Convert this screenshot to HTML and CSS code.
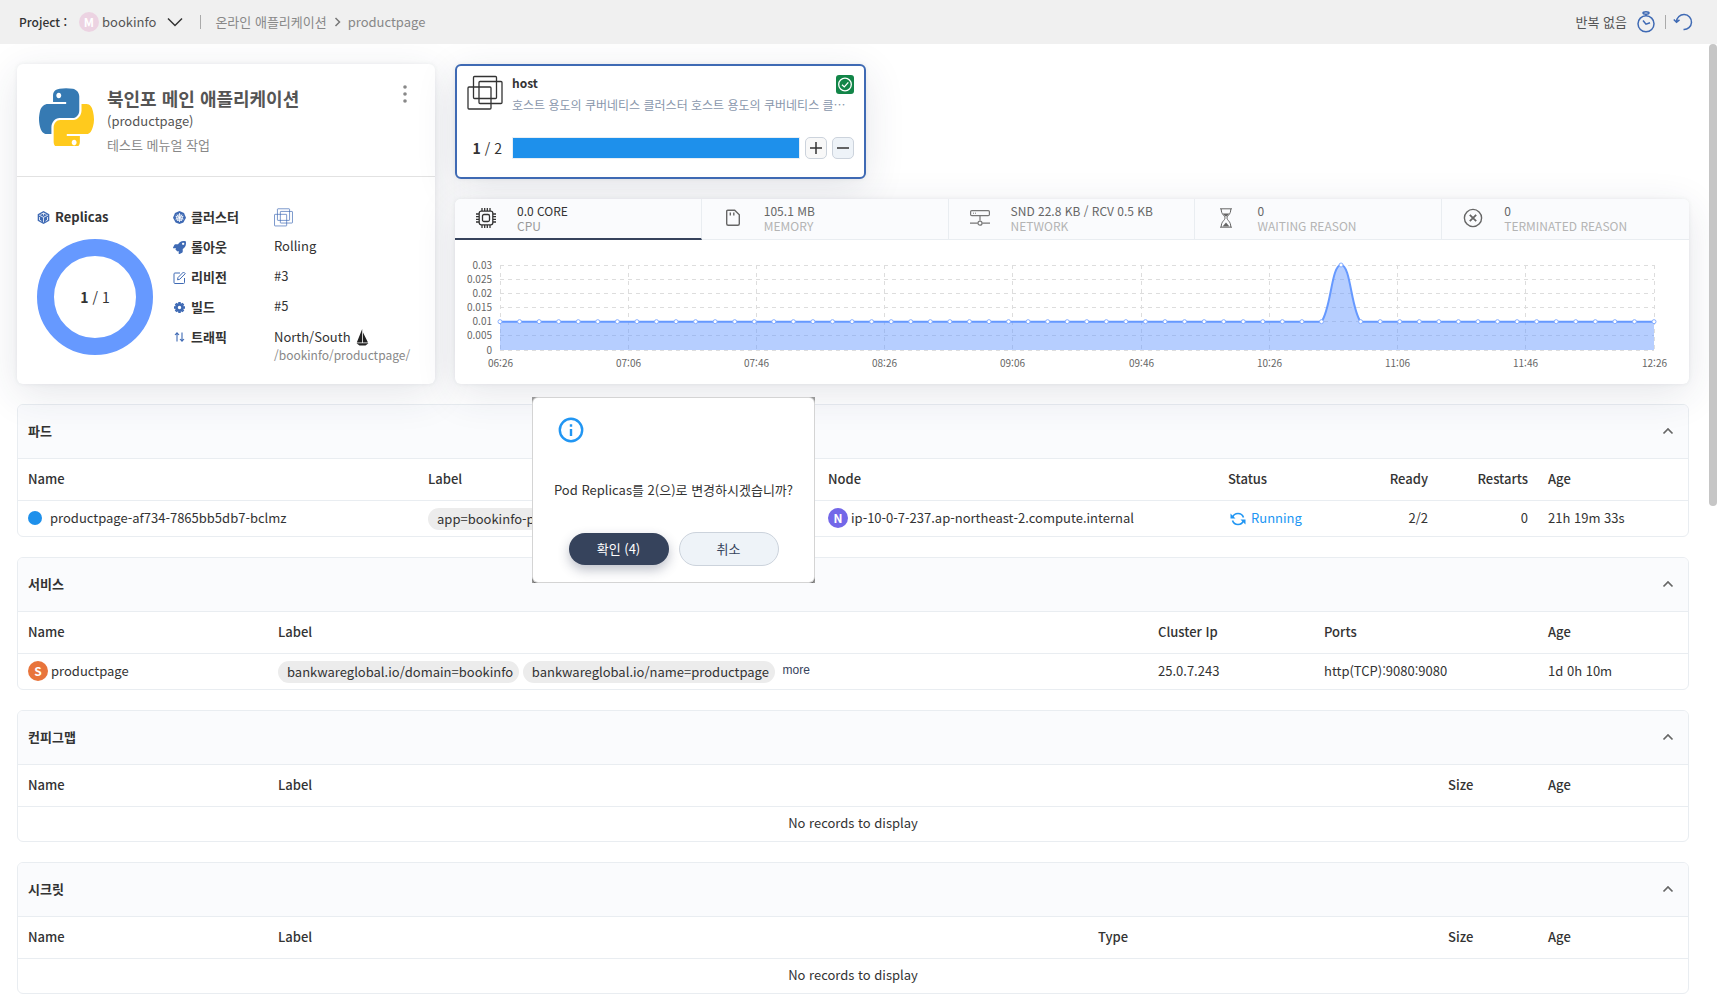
FILE: index.html
```html
<!DOCTYPE html>
<html lang="ko">
<head>
<meta charset="utf-8">
<title>productpage</title>
<meta name="viewport" content="width=device-width, initial-scale=1">
<link rel="stylesheet" href="styles.css">
</head>
<body>
<svg class="sprite" aria-hidden="true">
  <symbol id="i-layers" viewBox="0 0 36 36" fill="none" stroke="currentColor" stroke-width="1.300">
    <rect x="6.500" y="1.500" width="23" height="22" rx="1"/>
    <rect x="12" y="6.500" width="23" height="22" rx="1"/>
    <rect x="1" y="12" width="23" height="22" rx="1"/>
  </symbol>
  <symbol id="i-up" viewBox="0 0 12 12" fill="none" stroke="currentColor" stroke-width="1.700"><path d="M1.500 8.500 6 4l4.500 4.500"/></symbol>
</svg>

<header class="topbar">
  <span class="topbar-label">Project :</span>
  <button class="project" type="button">
    <span class="badge badge-m">M</span>
    <span>bookinfo</span>
    <svg class="project-arrow" width="16" height="10" viewBox="0 0 16 10" fill="none" stroke="#333" stroke-width="1.500"><path d="M1 1.500 8 8.500l7-7"/></svg>
  </button>
  <span class="bar bar-crumb"></span>
  <nav class="crumbs">
    <a href="#">온라인 애플리케이션</a>
    <svg width="7" height="10" viewBox="0 0 7 10" fill="none" stroke="#777" stroke-width="1.500"><path d="M1.500 1 5.500 5l-4 4"/></svg>
    <a href="#">productpage</a>
  </nav>
  <div class="refresh">
    <span>반복 없음</span>
    <button class="icon-btn" type="button" aria-label="Interval">
      <svg width="18" height="22" viewBox="0 0 18 22" fill="none" stroke="#3f6ab4" stroke-width="1.500"><ellipse cx="9" cy="2" rx="3" ry="1.200"/><path d="M9 3v2M6 9.500 9 13.200l4-1.500"/><circle cx="9" cy="12.800" r="8"/></svg>
    </button>
    <span class="bar"></span>
    <button class="icon-btn" type="button" aria-label="Reload">
      <svg width="20" height="18" viewBox="0 0 20 18" fill="none" stroke="#3f6ab4" stroke-width="1.500"><path d="M3.500 8.800A7.500 7.500 0 1 1 10.500 16.500M.8 6.500l2.700 2.800 3-2.500"/></svg>
    </button>
  </div>
</header>

<div class="scroller">
<main class="page">
  <div class="overview">
    <section class="card app">
      <div class="app-head">
        <svg class="app-logo" viewBox="0 31 448 418" preserveAspectRatio="none"><path fill="#ffca1d" d="M439.800 200.500c-7.700-30.900-22.300-54.200-53.400-54.200h-40.100v47.400c0 36.800-31.200 67.800-66.800 67.800H172.700c-29.200 0-53.400 25-53.400 54.300v101.800c0 29 25.200 46 53.400 54.300 33.800 9.900 66.300 11.700 106.800 0 26.900-7.800 53.400-23.500 53.400-54.300v-40.700H226.200v-13.600h160.200c31.100 0 42.600-21.700 53.400-54.200 11.200-33.500 10.700-65.700 0-108.600zM286.200 404c11.100 0 20.100 9.100 20.100 20.300 0 11.300-9 20.400-20.100 20.400-11 0-20.100-9.200-20.100-20.400.1-11.300 9.100-20.300 20.100-20.300z"/><path fill="#367ab3" d="M167.800 248.100h106.800c29.700 0 53.400-24.500 53.400-54.300V91.900c0-29-24.400-50.700-53.400-55.600-35.800-5.900-74.700-5.600-106.800.1-45.200 8-53.400 24.700-53.400 55.600v40.700h106.900v13.600h-147c-31.100 0-58.300 18.700-66.800 54.200-9.800 40.700-10.200 66.100 0 108.600 7.600 31.600 25.700 54.200 56.800 54.200H101v-48.800c0-35.300 30.500-66.400 66.800-66.400zm-6.700-142.600c-11.100 0-20.100-9.100-20.100-20.300.1-11.300 9-20.400 20.100-20.400 11 0 20.100 9.200 20.100 20.400s-9 20.300-20.100 20.300z"/></svg>
        <div class="app-names">
          <h1>북인포 메인 애플리케이션</h1>
          <p class="app-id">(productpage)</p>
          <p class="app-desc">테스트 메뉴얼 작업</p>
        </div>
        <button class="icon-btn app-menu" type="button" aria-label="Menu">
          <svg width="4" height="18" viewBox="0 0 4 18" fill="#888"><circle cx="2" cy="2" r="1.800"/><circle cx="2" cy="9" r="1.800"/><circle cx="2" cy="16" r="1.800"/></svg>
        </button>
      </div>
      <div class="app-body">
        <div class="replicas">
          <h2 class="spec-name">
            <svg width="13" height="13" viewBox="0 0 13 13"><path fill="#3f6ab4" d="M6.500 0 12.300 3.200v6.600L6.500 13 .7 9.800V3.200z"/><path fill="none" stroke="#fff" stroke-width=".8" d="M2 4l4.500 2.400L11 4M6.500 6.400v5M6.500 2 3.500 3.600M6.500 2l3 1.600M6.500 2v2.500M2.500 6v3l2 1.200M10.500 6v3l-2 1.200"/></svg>
            Replicas
          </h2>
          <div class="donut"><span><b>1</b> / 1</span></div>
        </div>
        <dl class="specs">
          <dt class="spec-name"><svg width="13" height="13" viewBox="0 0 13 13"><path fill="#3f6ab4" d="M6.500 0 11 2l2 4.700-2.600 4.800-3.900 1.500-3.900-1.500L0 6.700 2 2z"/><g fill="none" stroke="#fff" stroke-width=".8"><circle cx="6.500" cy="6.700" r="3"/><path d="M6.500 2v9M2.500 5.200l8 3M10.500 5.200l-8 3M4 10l5-6.500M9 10 4 3.500"/></g></svg>클러스터</dt>
          <dd><svg class="spec-cluster" width="19" height="19"><use href="#i-layers"/></svg></dd>
          <dt class="spec-name"><svg width="13" height="13" viewBox="0 0 512 512"><path fill="#3f6ab4" d="M505.100 19.100C503.800 13 499 8.200 492.900 6.900 460.700 0 435.500 0 410.400 0 307.200 0 245.300 55.200 199.100 128H94.900c-18.200 0-34.800 10.300-42.900 26.500L2.600 253.300c-8 16 3.600 34.700 21.500 34.700h95.100c-5.900 12.800-11.900 25.500-18 37.700-3.100 6.200-1.900 13.600 3 18.500l63.600 63.600c4.900 4.900 12.300 6.100 18.500 3 12.200-6.100 24.900-12 37.700-17.900V488c0 17.800 18.800 29.400 34.700 21.500l98.700-49.400c16.300-8.100 26.500-24.800 26.500-42.900V312.800c72.600-46.300 128-108.400 128-211.100.1-25.200.1-50.400-6.800-82.600zM400 160c-26.500 0-48-21.500-48-48s21.500-48 48-48 48 21.500 48 48-21.500 48-48 48z"/></svg>롤아웃</dt>
          <dd>Rolling</dd>
          <dt class="spec-name"><svg width="13" height="13" viewBox="0 0 13 13" fill="none" stroke="#3f6ab4"><path d="M7 2H1.800A1 1 0 0 0 1 3v8.500a1 1 0 0 0 1 1h8.500a1 1 0 0 0 1-1V7M4.500 8.800 5 6.500 10.500 1l1.700 1.700L6.700 8.300z"/></svg>리비전</dt>
          <dd>#3</dd>
          <dt class="spec-name"><svg width="13" height="13" viewBox="0 0 13 13" fill="none" stroke="#3f6ab4"><circle cx="6.500" cy="6.500" r="3.100" stroke-width="2.800"/><path stroke-width="2.500" d="M6.500 1v1.500M6.500 10.500V12M1 6.500h1.500M10.500 6.500H12M2.600 2.600l1 1M9.400 9.400l1 1M2.600 10.400l1-1M9.400 3.600l1-1"/></svg>빌드</dt>
          <dd>#5</dd>
          <dt class="spec-name"><svg width="13" height="13" viewBox="0 0 13 13" fill="none" stroke="#3f6ab4" stroke-width="1.100"><path d="M4 10.500V2M2 4l2-2.200L6 4M9 1.500V10M7 8l2 2.200L11 8"/></svg>트래픽</dt>
          <dd class="traffic">North/South <svg class="sail" width="13" height="17" viewBox="0 0 13 17" fill="#222"><path d="M6.200 0v13.500H.8zM7 3.500l5 10H7zM.5 14.300h12L9.500 16.500h-6z"/></svg><span class="path">/bookinfo/productpage/</span></dd>
        </dl>
      </div>
    </section>

    <div class="side">
      <section class="card cluster">
        <svg class="cluster-icon" width="36" height="36"><use href="#i-layers"/></svg>
        <div class="cluster-text">
          <h2>host</h2>
          <p>호스트 용도의 쿠버네티스 클러스터 호스트 용도의 쿠버네티스 클러스터</p>
        </div>
        <svg class="cluster-ok" width="18" height="19" viewBox="0 0 18 19"><rect width="18" height="19" rx="3" fill="#128548"/><g fill="none" stroke="#fff" stroke-width="1.300"><circle cx="9" cy="9.500" r="6.300"/><path d="m6 9.700 2.300 2.200 4-4.500"/></g></svg>
        <span class="cluster-count"><b>1</b> / 2</span>
        <div class="cluster-scale">
          <div class="gauge"></div>
          <button class="step" type="button" aria-label="Increase"><svg width="12" height="12" viewBox="0 0 12 12" stroke="#333" stroke-width="1.500"><path d="M0 6h12M6 0v12"/></svg></button>
          <button class="step step-down" type="button" aria-label="Decrease"><svg width="12" height="12" viewBox="0 0 12 12" stroke="#333" stroke-width="1.500"><path d="M0 6h12"/></svg></button>
        </div>
      </section>

      <section class="card metrics">
        <div class="tabs" role="tablist">
          <button class="tab tab-on" type="button" role="tab" aria-selected="true">
            <svg width="20" height="20" viewBox="0 0 20 20" fill="none" stroke="#333" stroke-width="1.300"><rect x="3.200" y="3.200" width="13.600" height="13.600" rx="2"/><rect x="6.500" y="6.500" width="7" height="7" rx="1.500"/><path d="M6 0v3M8.700 0v3M11.300 0v3M14 0v3M6 17v3M8.700 17v3M11.300 17v3M14 17v3M0 6h3M0 8.700h3M0 11.300h3M0 14h3M17 6h3M17 8.700h3M17 11.300h3M17 14h3"/></svg>
            <span>0.0 CORE<small>CPU</small></span>
          </button>
          <button class="tab" type="button" role="tab" aria-selected="false">
            <svg width="20" height="20" viewBox="0 0 20 20" fill="none" stroke="#666" stroke-width="1.400"><path d="M4.700 2.200h7l4.600 4.500v9a1.500 1.500 0 0 1-1.500 1.500H5.200a1.500 1.500 0 0 1-1.500-1.500v-12.500a1 1 0 0 1 1-1zM7.300 4.500v3M10.800 4.500v3"/></svg>
            <span>105.1 MB<small>MEMORY</small></span>
          </button>
          <button class="tab" type="button" role="tab" aria-selected="false">
            <svg width="20" height="20" viewBox="0 0 20 20" fill="none" stroke="#777"><rect x=".6" y="2.600" width="18.800" height="5" rx="1.200" stroke-width="1.200"/><path d="M10 7.600v5M0 15.200h7.800M12.200 15.200H20" stroke-width="1.200"/><circle cx="10" cy="15.200" r="2" stroke-width="1.200"/><path d="M3 5.200h1M5 5.200h1"/></svg>
            <span>SND 22.8 KB / RCV 0.5 KB<small>NETWORK</small></span>
          </button>
          <button class="tab" type="button" role="tab" aria-selected="false">
            <svg width="20" height="20" viewBox="0 0 20 20" fill="none" stroke="#666"><path d="M4 .8h12M4 19.200h12M5.200 1C5.200 7 9 7.500 9 10s-3.800 3-3.800 9M14.800 1c0 6-3.800 6.500-3.800 9s3.800 3 3.800 9"/><path fill="#666" stroke="none" d="M6.500 5.500h7L10.500 8.500h-1zM10 14.500l3.500 4h-7z"/></svg>
            <span>0<small>WAITING REASON</small></span>
          </button>
          <button class="tab" type="button" role="tab" aria-selected="false">
            <svg width="20" height="20" viewBox="0 0 20 20" fill="none" stroke="#666" stroke-width="1.400"><circle cx="10" cy="10" r="8.600"/><path stroke-width="1.800" d="m6.800 6.800 6.400 6.400M13.200 6.800l-6.400 6.400"/></svg>
            <span>0<small>TERMINATED REASON</small></span>
          </button>
        </div>
        <div class="chart" id="chart"></div>
      </section>
    </div>
  </div>

  <section class="panel">
    <div class="panel-head"><h2>파드</h2><button class="icon-btn" type="button" aria-label="Collapse"><svg width="12" height="12"><use href="#i-up"/></svg></button></div>
    <table>
      <colgroup><col class="w400"><col class="w400"><col class="w400"><col class="w120"><col><col class="w100"><col class="w150"></colgroup>
      <thead><tr><th>Name</th><th>Label</th><th>Node</th><th>Status</th><th class="num">Ready</th><th class="num">Restarts</th><th>Age</th></tr></thead>
      <tbody><tr>
        <td><span class="dot"></span>productpage-af734-7865bb5db7-bclmz</td>
        <td><span class="chip">app=bookinfo-productpage</span></td>
        <td><span class="badge badge-n">N</span>ip-10-0-7-237.ap-northeast-2.compute.internal</td>
        <td class="running"><svg width="16" height="14" viewBox="0 0 16 14" fill="none" stroke="#2196f3" stroke-width="1.600"><path d="M2.500 5.500A5.800 5.800 0 0 1 13.500 5.500M13.500 8.500A5.800 5.800 0 0 1 2.500 8.500"/><path fill="#2196f3" stroke="none" d="M.5 1.500v5h5zM15.500 12.500v-5h-5z"/></svg>Running</td>
        <td class="num">2/2</td><td class="num">0</td><td>21h 19m 33s</td>
      </tr></tbody>
    </table>
  </section>

  <section class="panel">
    <div class="panel-head"><h2>서비스</h2><button class="icon-btn" type="button" aria-label="Collapse"><svg width="12" height="12"><use href="#i-up"/></svg></button></div>
    <table>
      <colgroup><col class="w250"><col><col class="w166"><col class="w224"><col class="w150"></colgroup>
      <thead><tr><th>Name</th><th>Label</th><th>Cluster Ip</th><th>Ports</th><th>Age</th></tr></thead>
      <tbody><tr>
        <td><span class="badge badge-s">S</span>productpage</td>
        <td><span class="chip">bankwareglobal.io/domain=bookinfo</span> <span class="chip">bankwareglobal.io/name=productpage</span> <button class="more" type="button">more</button></td>
        <td>25.0.7.243</td><td>http(TCP):9080:9080</td><td>1d 0h 10m</td>
      </tr></tbody>
    </table>
  </section>

  <section class="panel">
    <div class="panel-head"><h2>컨피그맵</h2><button class="icon-btn" type="button" aria-label="Collapse"><svg width="12" height="12"><use href="#i-up"/></svg></button></div>
    <table>
      <colgroup><col class="w250"><col><col class="w100"><col class="w150"></colgroup>
      <thead><tr><th>Name</th><th>Label</th><th>Size</th><th>Age</th></tr></thead>
      <tbody><tr><td class="empty" colspan="4">No records to display</td></tr></tbody>
    </table>
  </section>

  <section class="panel">
    <div class="panel-head"><h2>시크릿</h2><button class="icon-btn" type="button" aria-label="Collapse"><svg width="12" height="12"><use href="#i-up"/></svg></button></div>
    <table>
      <colgroup><col class="w250"><col><col class="w350"><col class="w100"><col class="w150"></colgroup>
      <thead><tr><th>Name</th><th>Label</th><th>Type</th><th>Size</th><th>Age</th></tr></thead>
      <tbody><tr><td class="empty" colspan="5">No records to display</td></tr></tbody>
    </table>
  </section>
</main>
<div class="rail" aria-hidden="true"><div class="rail-thumb"></div></div>
</div>

<div class="modal" role="dialog" aria-label="Pod Replicas">
  <div class="modal-box">
    <svg class="modal-icon" width="26" height="26" viewBox="0 0 26 26" fill="none" stroke="#2196f3" stroke-width="2.400"><circle cx="13" cy="13" r="11.200"/><path d="M13 12v7M13 7.200v2.500"/></svg>
    <p>Pod Replicas를 2(으)로 변경하시겠습니까?</p>
    <div class="modal-actions">
      <button class="pill pill-main" type="button">확인 (4)</button>
      <button class="pill" type="button">취소</button>
    </div>
  </div>
</div>
<script src="chart.js"></script>
</body>
</html>
```
FILE: styles.css
```css
* { box-sizing: border-box; }

html, body { height: 100%; }

body {
  margin: 0;
  display: flex;
  flex-direction: column;
  overflow: hidden;
  background: #fff;
  color: #333;
  font: 13px/20px "Noto Sans CJK KR", "Noto Sans CJK SC", sans-serif;
}

h1, h2, p, dl, dd { margin: 0; }
h2 { font-size: 13px; line-height: 20px; font-weight: 700; }
a { color: inherit; text-decoration: none; }
button { font: inherit; color: inherit; cursor: pointer; }
svg { display: block; flex: none; }
.sprite { width: 0; height: 0; position: absolute; }

.icon-btn { padding: 0; border: 0; background: none; display: flex; }

/* Top bar */
.topbar {
  flex: none;
  display: flex;
  align-items: center;
  height: 44px;
  padding: 0 24px 0 19px;
  background: #f0f0f0;
}
.topbar-label { font-size: 12px; font-weight: 500; }
.project {
  display: flex;
  align-items: center;
  gap: 3px;
  margin-left: 12px;
  padding: 0;
  border: 0;
  background: none;
  color: #555;
}
.project-arrow { margin-left: 8px; }
.bar { width: 1px; height: 14px; background: #aaa; }
.bar-crumb { margin: 0 14px 0 17px; }
.crumbs { display: flex; align-items: center; gap: 7px; color: #888; }
.refresh { margin-left: auto; display: flex; align-items: center; gap: 10px; color: #555; }
.refresh .bar + .icon-btn { margin-left: -3px; }

.badge {
  display: inline-block;
  width: 20px;
  height: 20px;
  border-radius: 50%;
  color: #fff;
  font-size: 12px;
  font-weight: 700;
  line-height: 19px;
  text-align: center;
}
td .badge { margin-right: 3px; }
.badge-m { background: #ecd3e2; }
.badge-n { background: #7367e8; }
.badge-s { background: #e8743b; }

/* Page and its scroll rail */
.scroller { flex: 1; min-height: 0; display: flex; }
.page {
  flex: 1;
  min-width: 0;
  overflow-y: auto;
  scrollbar-width: none;
  padding: 20px 20px 20px 17px;
}
.rail { flex: none; width: 8px; }
.rail-thumb { height: 48%; background: #c6c6c6; border-radius: 4px; }

.card {
  background: #fff;
  border-radius: 6px;
  box-shadow: 0 10px 40px rgba(40, 50, 80, .12), 0 0 4px rgba(40, 50, 80, .08);
}
.overview {
  position: relative;
  z-index: 1;
  display: grid;
  grid-template-columns: 418px minmax(0, 1fr);
  gap: 20px;
}

/* Application card */
.app-head {
  display: flex;
  align-items: flex-start;
  height: 113px;
  padding: 21px 28px 0 22px;
  border-bottom: 1px solid #e2e2e2;
}
.app-logo { width: 55px; height: 58px; margin: 3px 13px 0 0; }
.app-names { flex: 1; }
.app-names h1 { margin: 0; color: #555; font-size: 18px; line-height: 26px; }
.app-id { color: #555; line-height: 20px; }
.app-desc { margin-top: 4px; color: #888; }
.app-body { display: flex; gap: 20px; padding: 30px 20px 0; }
.spec-name { display: flex; align-items: center; gap: 5px; height: 20px; font-weight: 700; line-height: 20px; }
.donut {
  display: grid;
  place-items: center;
  width: 116px;
  height: 116px;
  margin-top: 12px;
  border: 17px solid #6699ff;
  border-radius: 50%;
  font-size: 14px;
}
.specs { display: grid; grid-template-columns: 101px 1fr; grid-auto-rows: 20px; row-gap: 10px; }
.specs dd { line-height: 18px; }
.specs .traffic { line-height: 20px; }
.spec-cluster { color: #3f6ab4; margin-top: 1px; }
.sail { display: inline-block; vertical-align: -4px; margin-left: 2px; }
.path { display: block; line-height: 16px; font-size: 12px; color: #888; }

/* Cluster card */
.side { display: flex; flex-direction: column; gap: 20px; }
.cluster {
  display: grid;
  grid-template-columns: 35px minmax(0, 1fr) 18px;
  grid-template-rows: 40px 22px;
  gap: 22px 10px;
  align-items: start;
  align-content: start;
  width: 411px;
  height: 115px;
  padding: 9px 10px 0;
  border: 2px solid #3f6ab4;
}
.cluster-icon { color: #333; }
.cluster-text { grid-column: 2 / 4; grid-row: 1; }
.cluster-text h2 { line-height: 16px; font-size: 12px; }
.cluster-text p {
  margin: 4px 8px 0 0;
  overflow: hidden;
  white-space: nowrap;
  text-overflow: ellipsis;
  color: #8896ab;
  font-size: 12px;
}
.cluster-ok { grid-column: 3; grid-row: 1; }
.cluster-count { justify-self: end; font-size: 14px; line-height: 22px; }
.cluster-scale { grid-column: 2 / 4; display: flex; gap: 5px; }
.gauge { flex: 1; height: 22px; background: #1e90eb; border: 1px solid #e8eef4; }
.step {
  display: grid;
  place-items: center;
  width: 22px;
  height: 22px;
  padding: 0;
  border: 1px solid #ccd3dc;
  border-radius: 5px;
  background: #f8f8f8;
}
.step-down { background: #eef3f8; }

/* Metrics */
.metrics { flex: 1; overflow: hidden; }
.tabs { display: grid; grid-template-columns: repeat(5, 1fr); }
.tab {
  display: flex;
  align-items: center;
  gap: 21px;
  height: 41px;
  padding: 0 0 2px 21px;
  border: 0;
  border-right: 1px solid #e9edf1;
  border-bottom: 1px solid #e9edf1;
  background: #fafbfd;
  color: #666;
  font-size: 12px;
  line-height: 15px;
  text-align: left;
}
.tab:last-child { border-right: 0; }
.tab small { display: block; font-size: 12px; color: #b4b4b4; }
.tab-on { color: #333; border-bottom: 2px solid #36435c; padding-bottom: 1px; }
.tab-on small { color: #999; }
.chart { height: 144px; }
.chart svg { width: 100%; height: 144px; }
.chart text { fill: #666; font-size: 10px; }
.grid-line { stroke: #ddd; stroke-dasharray: 4 4; }
.area { fill: #6699ff; fill-opacity: .48; }
.line { fill: none; stroke: #6699ff; stroke-width: 2; }
.point { fill: #fff; stroke: #85adff; }

/* Record panels */
.panel { margin-top: 20px; border: 1px solid #e9edf1; border-radius: 6px; overflow: hidden; }
.panel-head {
  display: flex;
  align-items: center;
  justify-content: space-between;
  height: 54px;
  padding: 0 14px 2px 10px;
  border-bottom: 1px solid #e9edf1;
  background: #fafbfd;
}
.panel-head .icon-btn { color: #666; }
table { width: 100%; table-layout: fixed; border-collapse: collapse; }
th, td { padding: 0 10px; text-align: left; white-space: nowrap; }
th { height: 41px; font-weight: 500; border-bottom: 1px solid #e9edf1; }
td { height: 36px; }
td.empty { height: 35px; padding-bottom: 2px; text-align: center; }
th.num, td.num { text-align: right; }
.w100 { width: 100px; }
.w120 { width: 120px; }
.w150 { width: 150px; }
.w166 { width: 166px; }
.w224 { width: 224px; }
.w250 { width: 250px; }
.w350 { width: 350px; }
.w400 { width: 400px; }
.dot {
  display: inline-block;
  width: 14px;
  height: 14px;
  margin-right: 8px;
  border-radius: 50%;
  background: #1e90eb;
  vertical-align: -2px;
}
.chip {
  display: inline-block;
  height: 22px;
  padding: 0 6px 0 9px;
  border-radius: 11px;
  background: #ececec;
  line-height: 22px;
  vertical-align: -3px;
}
.more {
  padding: 0 4px;
  border: 0;
  background: none;
  color: #36435c;
  font-family: "Liberation Sans", sans-serif;
  font-size: 12px;
}
.running { color: #2196f3; }
.running svg { display: inline-block; margin: 0 5px 0 2px; vertical-align: -3px; }

/* Confirm dialog */
.modal {
  position: absolute;
  left: 532px;
  top: 397px;
  z-index: 10;
  width: 283px;
  padding: 1px;
  background: #999;
}
.modal-box {
  padding: 19px 20px 16px;
  border-radius: 5px;
  background: #fff;
  box-shadow: 0 0 0 1px #d4d4d4, 0 1px 1px 1px #666;
  text-align: center;
}
.modal { overflow: hidden; }
.modal-icon { margin-left: 5px; }
.modal p { margin-top: 37px; white-space: nowrap; }
.modal-actions { display: flex; align-items: center; justify-content: center; gap: 10px; margin-top: 32px; }
.pill {
  width: 100px;
  height: 34px;
  padding: 0;
  border: 1px solid #ccd3dc;
  border-radius: 17px;
  background: #eef3f8;
  color: #36435c;
}
.pill-main {
  height: 32px;
  border: 0;
  background: #36435c;
  color: #fff;
  box-shadow: 0 5px 12px rgba(40, 50, 80, .3);
}
```
FILE: chart.js
```js
// CPU usage area chart: 60 samples, one peak.
const box = document.getElementById('chart');
const values = Array.from({ length: 60 }, (_, i) => (i === 43 ? 0.03 : 0.01));
const times = ['06:26', '07:06', '07:46', '08:26', '09:06', '09:46', '10:26', '11:06', '11:46', '12:26'];
const ticks = [0, 0.005, 0.01, 0.015, 0.02, 0.025, 0.03];

function draw() {
  const left = 45, right = box.clientWidth - 35, top = 25, bottom = 110;
  const x = i => left + (right - left) * i / (values.length - 1);
  const y = v => bottom - (bottom - top) * v / 0.03;
  let out = '';
  ticks.forEach(t => {
    const gy = Math.floor(y(t)) + 0.5;
    out += `<path class="grid-line" d="M${left} ${gy}H${right}"/><text x="${left - 8}" y="${gy + 3}" text-anchor="end">${t}</text>`;
  });
  times.forEach((t, i) => {
    const gx = Math.floor(left + (right - left) * i / (times.length - 1)) + 0.5;
    out += `<path class="grid-line" d="M${gx} ${top}V${bottom}"/><text x="${gx}" y="127" text-anchor="middle">${t}</text>`;
  });
  let line = `M${x(0)} ${y(values[0])}`;
  for (let i = 1; i < values.length; i++) {
    const a = values[i - 1], b = values[i], s = x(i) - x(i - 1);
    const lift = (y(b) - y(a)) * 0.23;
    const c1 = a < b ? y(a) + lift : y(a);
    const c2 = a > b ? y(b) - lift : y(b);
    line += `C${x(i - 1) + s / 2} ${c1} ${x(i) - s / 2} ${c2} ${x(i)} ${y(b)}`;
  }
  out += `<path class="area" d="${line}V${bottom}H${left}Z"/><path class="line" d="${line}"/>`;
  values.forEach((v, i) => { out += `<circle class="point" cx="${x(i)}" cy="${y(v)}" r="2"/>`; });
  box.innerHTML = `<svg>${out}</svg>`;
}
draw();
addEventListener('resize', draw);
```
